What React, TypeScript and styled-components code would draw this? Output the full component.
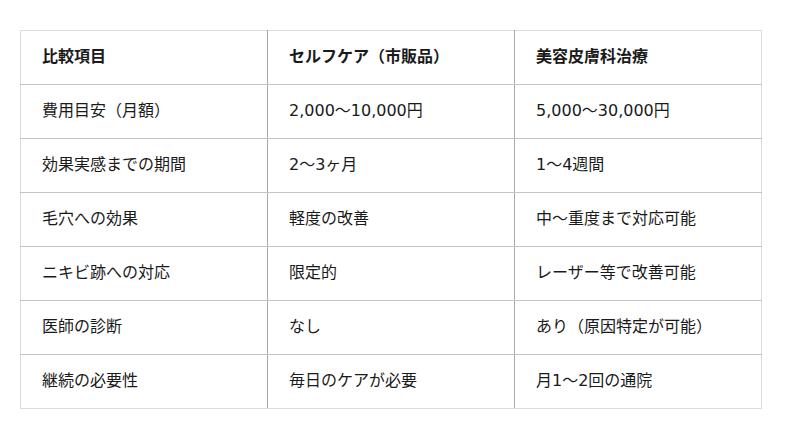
import * as React from 'react';
import styled, { createGlobalStyle } from 'styled-components';

const GlobalStyle = createGlobalStyle`
  body {
    margin: 0;
    background: #ffffff;
    font-family: "DejaVu Sans", "Noto Sans CJK JP", sans-serif;
    color: #1a1a1a;
  }
`;

const Page = styled.div`
  padding: 30px 20px;
`;

const Table = styled.table`
  width: 742px;
  border-collapse: collapse;
  border: 1px solid #dcdcdc;
  table-layout: fixed;
`;

const Cell = styled.td<{ $head?: boolean }>`
  height: 51px;
  padding: 0 21px 2px;
  font-size: 16px;
  line-height: 20px;
  font-weight: ${(p) => (p.$head ? 700 : 400)};
  text-align: left;
  vertical-align: middle;
  border-bottom: 1px solid #c4c4c4;
  border-right: 1px solid #a8a8a8;
  &:last-child {
    border-right: 1px solid #dcdcdc;
  }
`;

const Row = styled.tr`
  &:last-child td {
    border-bottom: 1px solid #dcdcdc;
  }
`;

const head = ['比較項目', 'セルフケア（市販品）', '美容皮膚科治療'];

const rows = [
  ['費用目安（月額）', '2,000～10,000円', '5,000～30,000円'],
  ['効果実感までの期間', '2～3ヶ月', '1～4週間'],
  ['毛穴への効果', '軽度の改善', '中～重度まで対応可能'],
  ['ニキビ跡への対応', '限定的', 'レーザー等で改善可能'],
  ['医師の診断', 'なし', 'あり（原因特定が可能）'],
  ['継続の必要性', '毎日のケアが必要', '月1～2回の通院'],
];

const App: React.FC = () => (
  <>
    <GlobalStyle />
    <Page>
      <Table>
        <tbody>
          <Row>
            {head.map((h) => (
              <Cell $head key={h}>{h}</Cell>
            ))}
          </Row>
          {rows.map((r) => (
            <Row key={r[0]}>
              {r.map((c) => (
                <Cell key={c}>{c}</Cell>
              ))}
            </Row>
          ))}
        </tbody>
      </Table>
    </Page>
  </>
);

export default App;
